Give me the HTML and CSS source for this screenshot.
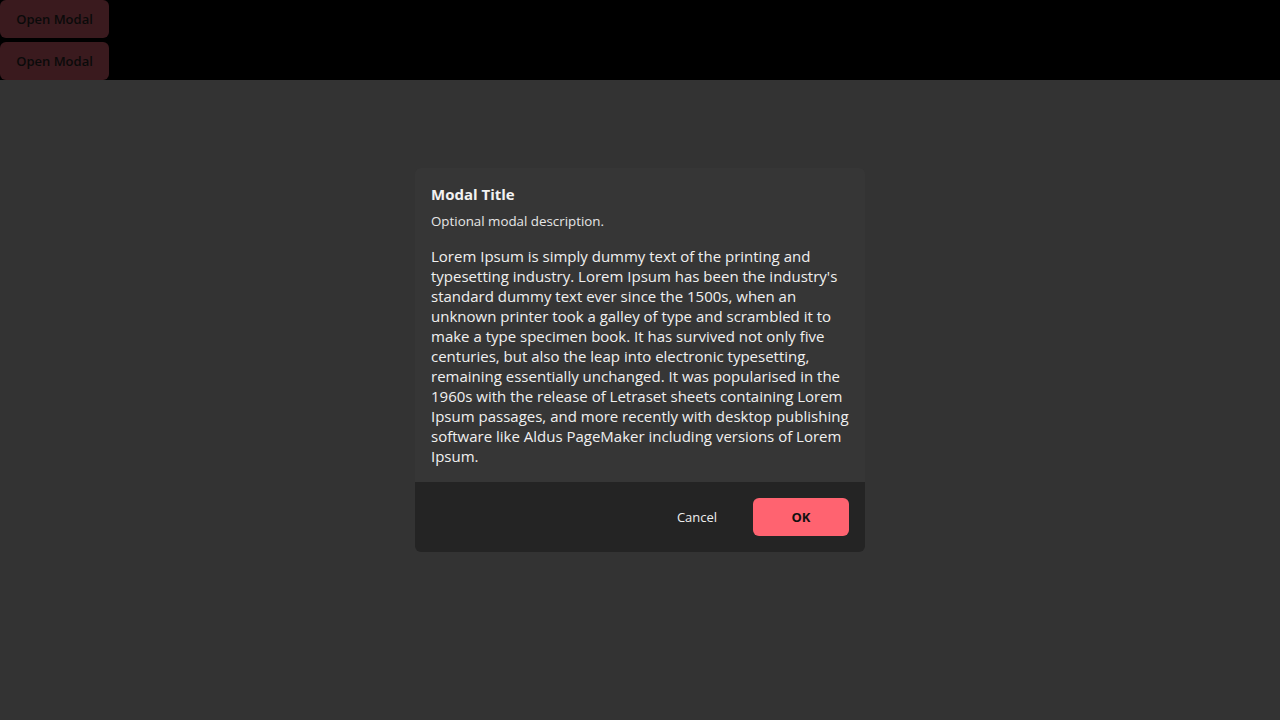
FILE: index.html
```html
<!DOCTYPE html>
<html>
<head>
<meta charset="utf-8">
<link rel="stylesheet" href="styles.css">
</head>
<body>
<div class="top">
  <button class="open-btn">Open Modal</button>
  <button class="open-btn">Open Modal</button>
</div>
<div class="backdrop">
  <div class="modal">
    <div class="modal-body">
      <h2 class="title">Modal Title</h2>
      <p class="desc">Optional modal description.</p>
      <p class="text">Lorem Ipsum is simply dummy text of the printing and typesetting industry. Lorem Ipsum has been the industry's standard dummy text ever since the 1500s, when an unknown printer took a galley of type and scrambled it to make a type specimen book. It has survived not only five centuries, but also the leap into electronic typesetting, remaining essentially unchanged. It was popularised in the 1960s with the release of Letraset sheets containing Lorem Ipsum passages, and more recently with desktop publishing software like Aldus PageMaker including versions of Lorem Ipsum.</p>
    </div>
    <div class="modal-footer">
      <button class="btn-cancel">Cancel</button>
      <button class="btn-ok">OK</button>
    </div>
  </div>
</div>
</body>
</html>
```
FILE: styles.css
```css
* { box-sizing: border-box; }
html, body { margin: 0; padding: 0; }
body {
  background: #333333;
  font-family: "Open Sans", "Noto Sans", sans-serif;
  color: #eeeeee;
  height: 720px;
  overflow: hidden;
}
.top {
  background: #000;
  display: flex;
  flex-direction: column;
  align-items: flex-start;
  gap: 4px;
}
.open-btn {
  font-family: inherit;
  font-size: 13px;
  font-weight: 600;
  color: #0a0a0a;
  background: #3a1a1e;
  border: none;
  border-radius: 6px;
  width: 109px;
  height: 38px;
  padding: 0;
}
.backdrop {
  display: flex;
  justify-content: center;
  padding-top: 88px;
}
.modal {
  width: 450px;
  background: #363636;
  border-radius: 6px;
  overflow: hidden;
}
.modal-body {
  padding: 16px;
}
.title {
  margin: 0;
  font-size: 15px;
  font-weight: 700;
  line-height: 20px;
  color: #f2f2f2;
}
.desc {
  margin: 8px 0 0;
  font-size: 13.33px;
  line-height: 18px;
  color: #e6e6e6;
}
.text {
  margin: 16px 0 0;
  font-size: 15px;
  line-height: 20px;
  color: #f0f0f0;
}
.modal-footer {
  background: #242424;
  padding: 16px;
  display: flex;
  justify-content: flex-end;
  gap: 16px;
}
.btn-cancel, .btn-ok {
  font-family: inherit;
  font-size: 13px;
  height: 38px;
  border: none;
  border-radius: 6px;
  padding: 0;
}
.btn-cancel {
  background: transparent;
  color: #eeeeee;
  width: 80px;
}
.btn-ok {
  background: #ff6370;
  color: #111;
  font-weight: 700;
  width: 96px;
}
```
